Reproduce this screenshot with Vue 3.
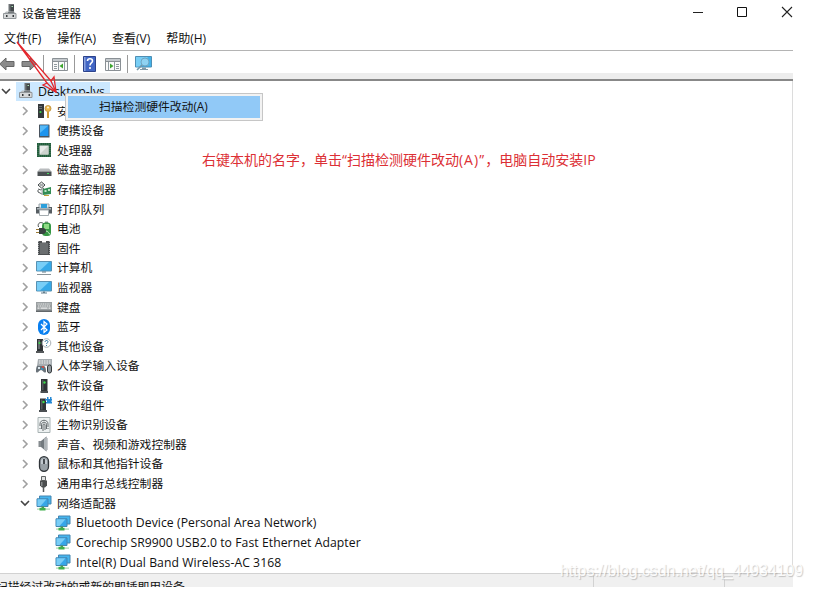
<template>
  <div class="page">
    <svg class="sprite" aria-hidden="true">
      <symbol id="i-root" viewBox="0 0 16 16">
        <path d="M6.500 0h5.500v9H6.500z" fill="#6d7275" />
        <path d="M8.500 1H12v8H8.500z" fill="#42474a" />
        <path d="M9.500 2h1.500v1H9.500z" fill="#a9e0b4" />
        <path d="M4 7.500h8l2 2H2z" fill="#b9bdbf" />
        <path d="M6 8h6v1.500H6z" fill="#74797c" />
        <path d="M1.500 9.500h12.500v5H1.500z" fill="#d6d8d9" stroke="#92979a" />
        <path d="M4 11h1.500v2H4zM10.500 11H12v2h-1.500z" fill="#34383b" />
      </symbol>
      <symbol id="i-security" viewBox="0 0 16 16">
        <path d="M2 1h6v14H2z" fill="#34383b" />
        <path d="M3 3h3v1H3zM3 5h3v1H3z" fill="#6b7073" />
        <circle cx="4.500" cy="9" r="1.100" fill="#3edb4c" />
        <circle cx="12" cy="5.500" r="3" fill="#edba4d" stroke="#b98a35" stroke-width=".8" />
        <circle cx="12" cy="4.500" r="1" fill="#fff5dc" />
        <path d="M11 8.500h2V15h-2z" fill="#d09a35" />
      </symbol>
      <symbol id="i-portable" viewBox="0 0 16 16">
        <rect x="3" y="1.500" width="10.500" height="13" rx=".6" fill="#48535e" />
        <path d="M4 2.500h8.500v10.500H4z" fill="#1d94ee" />
        <path d="M4 2.500h8.500L4 10z" fill="#55b9f7" />
      </symbol>
      <symbol id="i-cpu" viewBox="0 0 16 16">
        <path d="M1 1h14v14H1z" fill="#215c3b" />
        <path d="M2 2h12v12H2z" fill="none" stroke="#4c7d60" stroke-dasharray="1 1" />
        <path d="M3.500 3.500h9v9h-9z" fill="#e8ebe9" />
        <path d="M12.500 3.500v9h-9z" fill="#cdd3ce" />
      </symbol>
      <symbol id="i-disk" viewBox="0 0 16 16">
        <path d="M4 6.500h9l2.500 3h-14z" fill="#b9bcbe" />
        <path d="M1.500 9.500h14V14h-14z" fill="#4b5052" />
        <path d="M11 11h2v1h-2z" fill="#47db5f" />
      </symbol>
      <symbol id="i-storage" viewBox="0 0 16 16">
        <path d="m2 4 3.500-3L9 4 5.500 7z" fill="#e6e9e8" stroke="#43484a" />
        <path d="M2 8l3 1 3-2M2 9v2l4 2" fill="none" stroke="#555b5d" />
        <path d="M4 4h3" stroke="#6c7274" />
        <path d="M5.500 8h1.500v6H5.500z" fill="#b0b6b6" />
        <path d="m7 8 8-2v7l-8 1z" fill="#348d55" />
        <path d="M8.500 9h2v2h-2zM12 8h2v2h-2z" fill="#bfe4c7" />
        <path d="M8 14h5v1H8z" fill="#c5a03c" />
      </symbol>
      <symbol id="i-printer" viewBox="0 0 16 16">
        <path d="M3 3h10v4H3z" fill="#dce8ee" stroke="#9aa3a8" />
        <path d="M5 3h6v4H5z" fill="#2c9fdb" />
        <path d="M0 6h3l1 1.500h8L13 6h3v6.500H0z" fill="#565d62" />
        <path d="M1 7h14v1.500H1z" fill="#aab4b9" />
        <path d="M3.500 9h9v5.500h-9z" fill="#fff" stroke="#a4acb0" />
      </symbol>
      <symbol id="i-battery" viewBox="0 0 16 16">
        <path d="M2.500 6C1 2 5 0 8 3" fill="none" stroke="#444b4a" />
        <path d="M9 .5h3v2H9z" fill="#8b9390" />
        <rect x="6" y="1.500" width="9" height="13.500" rx="3.500" fill="#369744" />
        <path d="M8 3h5v5H8z" fill="#8fdb85" />
        <path d="M0 8.500h3.500M0 11.500h3.500" stroke="#9c7a35" />
        <path d="M3 7h4c4 0 4 6 0 6H3z" fill="#3a4241" />
        <path d="M10 10c3 0 2 3 4 3" fill="none" stroke="#d1edce" />
      </symbol>
      <symbol id="i-firmware" viewBox="0 0 16 16">
        <path d="M2 1h4v1.500h4V1h4v14H2z" fill="#4d5052" />
        <path d="M2.500 1v14M13.500 1v14" stroke="#a0a3a5" stroke-dasharray="1 1" />
        <path d="M4 3h8v11H4z" fill="#6a6e70" />
      </symbol>
      <symbol id="i-computer" viewBox="0 0 16 16">
        <path d="M.5 1.500h15v9.500H.5z" fill="#36a9e8" stroke="#5791b3" />
        <path d="M1 2h12L4 10.500H1z" fill="#78cef7" />
        <path d="M6 11.500h4v1H6z" fill="#5e7887" />
        <path d="M1 14h14v1H1z" fill="#8a9499" />
      </symbol>
      <symbol id="i-monitor" viewBox="0 0 16 16">
        <path d="M.5 2.500h15v9.500H.5z" fill="#36a9e8" stroke="#5791b3" />
        <path d="M1 3h12l-9 8.500H1z" fill="#78cef7" />
        <path d="M7 12.500h2v1h2v1H5v-1h2z" fill="#647e8d" />
      </symbol>
      <symbol id="i-keyboard" viewBox="0 0 16 16">
        <path d="M0 3h16v10H0z" fill="#9a9fa1" />
        <path d="M0 11.500h16V13H0z" fill="#62676a" />
        <path d="M1.500 5h13M2 7h12" stroke="#eef0f0" stroke-width="1.200" stroke-dasharray="1.200 .6" />
        <path d="M1.500 9.200h2m1 0h7m1 0h2" stroke="#eef0f0" stroke-width="1.200" />
      </symbol>
      <symbol id="i-bluetooth" viewBox="0 0 16 16">
        <rect x="2" y="0" width="12" height="16" rx="6" fill="#087ff0" />
        <path d="m5 5 6 6-3 2.500v-11L11 5l-6 6" fill="none" stroke="#fff" stroke-width="1.200" />
      </symbol>
      <symbol id="i-other" viewBox="0 0 16 16">
        <path d="M1 1h6v13H1z" fill="#303437" />
        <path d="M2 2h2v9H2z" fill="#656b6e" />
        <path d="M0 13h8v2H0z" fill="#55595b" />
        <circle cx="3.500" cy="5" r="1.100" fill="#3edb4c" />
        <circle cx="10.500" cy="5" r="4.300" fill="#fff" stroke="#a9b0b4" />
        <path d="M9 4c0-2 3-2 3-.3 0 1.300-1.500 1-1.500 2.300M10.500 7v1" fill="none" stroke="#377ba4" />
      </symbol>
      <symbol id="i-hid" viewBox="0 0 16 16">
        <path d="M2 1h14v7H1z" fill="#a8aeb2" />
        <path d="M3 3h12M3 5h12" stroke="#f0f2f3" stroke-dasharray="1.500 1" />
        <path d="M0 14c0-6 1-7 3-6h4c2 0 3 1 3 6-2 2-3-2-5-2s-3 4-5 2z" fill="#697279" />
        <path d="M2 9h2v2H2z" fill="#dce7ed" />
        <circle cx="7" cy="9" r="1" fill="#e34b3e" />
        <circle cx="6" cy="11" r="1" fill="#289bd6" />
        <rect x="11.500" y="7" width="4" height="8" rx="2" fill="#91999e" stroke="#33383b" />
      </symbol>
      <symbol id="i-device" viewBox="0 0 16 16">
        <path d="M5 1h6.500v12H5z" fill="#303437" />
        <path d="M6 2h1.500v10H6z" fill="#555b5e" />
        <path d="M4.500 13h7.500v2H4.500z" fill="#4a4f52" />
        <circle cx="8.500" cy="4.500" r="1.200" fill="#3edb4c" />
      </symbol>
      <symbol id="i-component" viewBox="0 0 16 16">
        <path d="M4 1.500h6v12H4z" fill="#303437" />
        <path d="M5 2.500h1.500v10H5z" fill="#555b5e" />
        <path d="M3 13h8v2H3z" fill="#4a4f52" />
        <circle cx="7.500" cy="5" r="1.200" fill="#3edb4c" />
        <path d="M11 0h1.500v2H14V0h1.500v2h.5v1.500h-.5V5h.5v1.500h-6V5h1V3.500H9V2h2z" fill="#2488d4" />
      </symbol>
      <symbol id="i-biometric" viewBox="0 0 16 16">
        <path d="M2 .5h12v15H2z" fill="#edf1f1" stroke="#a8b2b3" />
        <path
          d="M4 9V7c0-5 8-5 8 0v3M5.500 12V7.500c0-3 5-3 5 0V12M7 14V8c0-1.500 2-1.500 2 0v5M4 11v1M12 11v1"
          fill="none"
          stroke="#575e60"
          stroke-width=".9"
        />
      </symbol>
      <symbol id="i-sound" viewBox="0 0 16 16">
        <path d="M2.500 5H5v6H2.500z" fill="#858b8f" />
        <path d="m5 5 5.500-4.500v15L5 11z" fill="#72797e" />
        <path d="m8 2.500 2.500-2v15L8 13.500z" fill="#aeb4b8" />
        <path d="M11.500 2v12" stroke="#c9cdd0" />
      </symbol>
      <symbol id="i-mouse" viewBox="0 0 16 16">
        <rect x="3.500" y=".7" width="9" height="14.600" rx="4.500" fill="#98a0a6" stroke="#2f3439" stroke-width="1.300" />
        <path d="M5 4q3-3 6 0v4H5z" fill="#c3cad0" />
        <path d="M7.200 3h1.600v5H7.200z" fill="#272c31" />
      </symbol>
      <symbol id="i-usb" viewBox="0 0 16 16">
        <path d="M5.500.500h4v4h-4z" fill="#e1e2e2" stroke="#606465" />
        <path d="M4 4.500h7v5l-2 2H6l-2-2z" fill="#4b4e4f" />
        <path d="M5 6h1.500v4H5z" fill="#888c8d" />
        <path d="M7.500 11v5" stroke="#55595a" stroke-width="1.500" />
      </symbol>
      <symbol id="i-network" viewBox="0 0 16 16">
        <path d="M3.500 1h11.500v8H3.500z" fill="#45b5ee" stroke="#4585b0" />
        <path d="M1 3.800h11v7.700H1z" fill="#36a6e8" stroke="#4585b0" />
        <path d="M1.500 4.300h9l-6 6.700h-3z" fill="#79cdf6" />
        <path d="M5.500 11.500h2.500v1.500H5.500z" fill="#4d9b59" />
        <path d="M1 13.500h13v1.200H1z" fill="#a9d9ad" />
        <path d="M3.500 12.800h6v2.700h-6z" fill="#3fae4b" />
      </symbol>
    </svg>

    <div class="window">
      <header class="titlebar">
        <svg class="icon app-icon"><use href="#i-root" /></svg>
        <span class="title">设备管理器</span>
        <svg class="controls" viewBox="0 0 100 16">
          <path d="M0 8.500h10" stroke="#222" />
          <path d="M44.500 3.500h9v9h-9z" fill="none" stroke="#111" />
          <path d="m89 3 10 10M99 3 89 13" stroke="#222" stroke-width="1.100" />
        </svg>
      </header>

      <nav class="menubar">
        <span v-for="m in menus" :key="m" class="menu">{{ m }}</span>
      </nav>

      <div class="toolbar">
        <svg class="tool back" viewBox="0 0 16 16">
          <path d="M.7 8 7 2v3.500h8v5H7V14z" fill="#8b8b8b" stroke="#666" />
        </svg>
        <svg class="tool forward" viewBox="0 0 16 16">
          <path d="M15.300 8 9 2v3.500H1v5h8V14z" fill="#8b8b8b" stroke="#666" />
        </svg>
        <i class="sep"></i>
        <svg class="tool tree-pane" viewBox="0 0 16 16">
          <path d="M.5 2.500h15v12H.5z" fill="#fafafa" stroke="#8a9095" />
          <path d="M1 3h14v3H1z" fill="#c4c9cd" />
          <path d="M1 5.500h14" stroke="#8a9095" />
          <path d="M6.500 6v8M2 8.500h3M2 10.500h3M2 12.500h3M12.500 6v8" stroke="#8f999f" />
          <path d="M11 7.500v5L7.500 10z" fill="#3da52f" />
        </svg>
        <i class="sep"></i>
        <svg class="tool help" viewBox="0 0 13 16">
          <path d="M.5.500h12v15H.5z" fill="#4266c4" stroke="#2c428b" />
          <path d="M1 1h1.500v14H1z" fill="#8aa2df" />
          <path d="M4.500 5c0-3 5-3 5 0 0 2-2.500 2-2.500 4.500M7 11v2" fill="none" stroke="#fff" stroke-width="1.600" />
        </svg>
        <svg class="tool action-pane" viewBox="0 0 16 16">
          <path d="M.5 2.500h15v12H.5z" fill="#fafafa" stroke="#8a9095" />
          <path d="M1 3h14v3H1z" fill="#c4c9cd" />
          <path d="M1 5.500h14" stroke="#8a9095" />
          <path d="M9.500 6v8M3.500 6v8M11 8.500h3M11 10.500h3M11 12.500h3" stroke="#8f999f" />
          <path d="M5 7.500v5L8.500 10z" fill="#3da52f" />
        </svg>
        <i class="sep"></i>
        <svg class="tool scan" viewBox="0 0 17 16">
          <path d="M.5.500h16v10.500H.5z" fill="#43b2e9" stroke="#4f8fb4" />
          <path d="M1 1h12L5 10.500H1z" fill="#78cef5" />
          <path d="M7 11.500h4v1.500h2v1H5v-1h2z" fill="#8299a6" />
          <circle cx="10" cy="6" r="4" fill="#8fd2f2" stroke="#6fa5c2" />
          <path d="m7 9-5 5" stroke="#7397ab" stroke-width="1.600" />
        </svg>
      </div>

      <main class="tree">
        <div class="row root">
          <svg class="chevron open" viewBox="0 0 10 10"><path d="m1 3 4 4 4-4" /></svg>
          <span class="selected">
            <svg class="icon"><use href="#i-root" /></svg>
            <span class="name">Desktop-lvs</span>
          </span>
        </div>
        <div v-for="d in devices" :key="d.name" class="row">
          <svg class="chevron" :class="{ open: d.open }" viewBox="0 0 10 10">
            <path :d="d.open ? 'm1 3 4 4 4-4' : 'm3 1 4 4-4 4'" />
          </svg>
          <svg class="icon"><use :href="'#i-' + d.icon" /></svg>
          <span class="name">{{ d.name }}</span>
        </div>
        <div v-for="a in adapters" :key="a" class="row child">
          <svg class="icon"><use href="#i-network" /></svg>
          <span class="name">{{ a }}</span>
        </div>
      </main>

      <footer class="statusbar">
        <span class="status-text">扫描经过改动的或新的即插即用设备</span>
        <i class="cell"></i>
        <i class="cell last"></i>
      </footer>

      <div class="context-menu">
        <div class="context-item">扫描检测硬件改动(A)</div>
      </div>

      <svg class="arrow" viewBox="0 0 50 60">
        <path d="M3 4 33 45l-4 2 13 7-2-15-3 4z" />
        <path d="m33 45 9 9-5-11" />
      </svg>
    </div>

    <div class="note">右键本机的名字，单击“扫描检测硬件改动<span class="latin">(A)”</span>，电脑自动安装IP</div>
    <div class="watermark">https://blog.csdn.net/qq_44934109</div>
  </div>
</template>

<script setup>
const menus = ['文件(F)', '操作(A)', '查看(V)', '帮助(H)']

const devices = [
  { name: '安全设备', icon: 'security' },
  { name: '便携设备', icon: 'portable' },
  { name: '处理器', icon: 'cpu' },
  { name: '磁盘驱动器', icon: 'disk' },
  { name: '存储控制器', icon: 'storage' },
  { name: '打印队列', icon: 'printer' },
  { name: '电池', icon: 'battery' },
  { name: '固件', icon: 'firmware' },
  { name: '计算机', icon: 'computer' },
  { name: '监视器', icon: 'monitor' },
  { name: '键盘', icon: 'keyboard' },
  { name: '蓝牙', icon: 'bluetooth' },
  { name: '其他设备', icon: 'other' },
  { name: '人体学输入设备', icon: 'hid' },
  { name: '软件设备', icon: 'device' },
  { name: '软件组件', icon: 'component' },
  { name: '生物识别设备', icon: 'biometric' },
  { name: '声音、视频和游戏控制器', icon: 'sound' },
  { name: '鼠标和其他指针设备', icon: 'mouse' },
  { name: '通用串行总线控制器', icon: 'usb' },
  { name: '网络适配器', icon: 'network', open: true },
]

const adapters = [
  'Bluetooth Device (Personal Area Network)',
  'Corechip SR9900 USB2.0 to Fast Ethernet Adapter',
  'Intel(R) Dual Band Wireless-AC 3168',
]
</script>

<style>
body {
  background: #fff;
  overflow: hidden;
}
</style>

<style scoped>
.page {
  position: relative;
  width: 813px;
  height: 589px;
  overflow: hidden;
  color: #111;
  font-family: 'Open Sans', 'Noto Sans CJK SC', sans-serif;
  font-size: 11.8px;
  white-space: nowrap;
}

.sprite {
  position: absolute;
  width: 0;
  height: 0;
}

.window {
  position: relative;
  display: flex;
  flex-direction: column;
  width: 793px;
  height: 587px;
  overflow: hidden;
}

.icon {
  flex: none;
  width: 16px;
  height: 16px;
}

.titlebar {
  display: flex;
  flex: none;
  align-items: center;
  box-sizing: border-box;
  height: 25px;
  padding: 0 0 1px 2px;
}

.title {
  margin-left: 4px;
}

.controls {
  width: 100px;
  height: 16px;
  margin-left: auto;
}

.menubar {
  display: flex;
  flex: none;
  align-items: center;
  gap: 16px;
  box-sizing: border-box;
  height: 26px;
  padding: 1px 0 0 4px;
  border-bottom: 1px solid #b4b4b4;
  font-size: 12px;
}

.toolbar {
  display: flex;
  flex: none;
  align-items: center;
  box-sizing: border-box;
  height: 30px;
  padding-bottom: 3px;
  border-bottom: 2px solid #888;
  background: linear-gradient(#fff 22px, #ededed 22px);
}

.tool {
  flex: none;
  width: 16px;
  height: 16px;
}

.back {
  margin-left: -1px;
}

.forward {
  margin-left: 6px;
}

.sep {
  flex: none;
  width: 1px;
  height: 18px;
  background: #999;
}

.forward + .sep {
  margin-left: 6px;
}

.tree-pane {
  margin-left: 8px;
}

.tree-pane + .sep {
  margin-left: 6px;
}

.help {
  width: 13px;
  margin-left: 8px;
}

.action-pane {
  margin-left: 9px;
}

.action-pane + .sep {
  margin-left: 6px;
}

.scan {
  width: 17px;
  margin-left: 7px;
}

.tree {
  flex: 1;
  min-height: 0;
  box-sizing: border-box;
  padding-top: 0.6px;
  border-right: 1px solid #dcdcdc;
  overflow: hidden;
}

.row {
  display: flex;
  align-items: center;
  height: 19.62px;
  padding-left: 20px;
  line-height: 19px;
}

.row .icon {
  margin-left: 6px;
}

.name {
  margin-left: 5px;
}

.root {
  padding-left: 1px;
}

.selected {
  display: flex;
  align-items: center;
  width: 94px;
  height: 19px;
  margin-left: 5px;
  background: #cce8ff;
}

.selected .icon {
  margin-left: 2px;
}

.selected .name {
  margin-left: 4px;
  font-size: 12.4px;
}

.child {
  padding-left: 49px;
}

.child .name {
  font-size: 12.2px;
  letter-spacing: 0.06px;
}

.chevron {
  flex: none;
  width: 10px;
  height: 10px;
  fill: none;
  stroke: #a0a0a0;
  stroke-width: 1.6;
}

.chevron.open {
  stroke: #444;
}

.statusbar {
  display: flex;
  flex: none;
  box-sizing: border-box;
  height: 14px;
  border-top: 1px solid #d2d2d2;
  background: #f0f0f0;
  overflow: hidden;
}

.status-text {
  width: 597px;
  margin-left: -4px;
  padding-top: 4px;
  line-height: 17px;
}

.cell {
  width: 130px;
  height: 12px;
  margin-top: 2px;
  border-left: 1px solid #d2d2d2;
}

.last {
  width: 8px;
  border-top: 1px solid #d2d2d2;
}

.context-menu {
  position: absolute;
  top: 93px;
  left: 65px;
  box-sizing: border-box;
  width: 198px;
  height: 28px;
  padding: 2px;
  border: 1px solid #c6c6c6;
  background: #f2f2f2;
}

.context-item {
  height: 22px;
  padding-left: 31px;
  background: #91c9f7;
  line-height: 21px;
}

.arrow {
  position: absolute;
  top: 38px;
  left: 14px;
  width: 50px;
  height: 60px;
  fill: none;
  stroke: #e3262c;
  stroke-width: 1.3;
}

.note {
  position: absolute;
  top: 150px;
  left: 202px;
  color: #dc3035;
  font-size: 14px;
  line-height: 20px;
}

.latin {
  letter-spacing: 1.1px;
}

.watermark {
  position: absolute;
  top: 561px;
  left: 560px;
  color: rgba(255, 255, 255, 0.9);
  font-family: 'Liberation Sans', sans-serif;
  font-size: 15.85px;
  line-height: 20px;
  text-shadow: 1px 1px 1px rgba(0, 0, 0, 0.2);
}
</style>
